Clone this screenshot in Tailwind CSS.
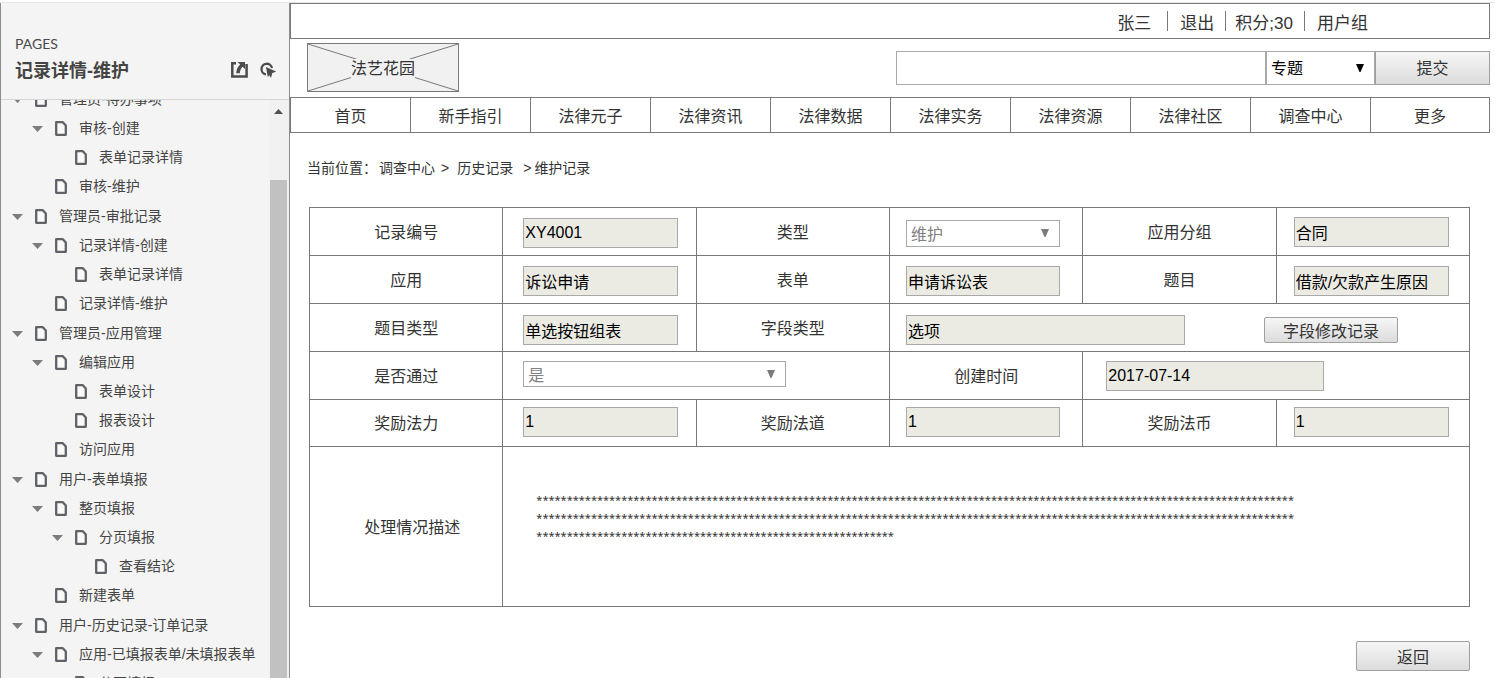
<!DOCTYPE html>
<html lang="zh-CN">
<head>
<meta charset="utf-8">
<title>记录详情-维护</title>
<script src="https://cdn.jsdelivr.net/npm/@tailwindcss/browser@4"></script>
</head>
<body class="flex h-screen flex-col overflow-hidden bg-white font-['Liberation_Sans','Noto_Sans_CJK_SC',sans-serif] text-base leading-6 text-[#333]">
<svg class="hidden" aria-hidden="true">
  <symbol id="page" viewBox="0 0 12 15"><path d="M1.2 1.2h6.600l3 3.300v9.300H1.200z" fill="#fafafa" stroke="#5f6266" stroke-width="2.300" stroke-linejoin="round"/></symbol>
  <symbol id="tri" viewBox="0 0 11 6"><path d="M0 0h11L5.500 6z" fill="#7c7c7c"/></symbol>
  <symbol id="drop" viewBox="0 0 8 8"><path d="M0 0h8L4.500 8h-1z" fill="currentColor"/></symbol>
</svg>
<div class="h-[3px] shrink-0 border-b border-[#e4e6e9]"></div>
<div class="flex min-h-0 flex-1">
  <aside class="flex w-[290px] shrink-0 flex-col border-x border-[#8b8d90] bg-[#f4f4f4]">
    <header class="flex h-[97px] shrink-0 flex-col border-b border-[#d6d6d6] pt-[31px] pr-[13px] pl-[14px]">
      <div class="font-[Lato,sans-serif] text-sm leading-5 text-[#4a4a4a]">PAGES</div>
      <div class="flex items-start justify-between pt-[3px]">
        <h1 class="text-lg leading-7 font-bold text-[#444]">记录详情-维护</h1>
        <div class="flex gap-3 pt-[5px] text-[#4c4c4c]">
          <button type="button" aria-label="打开链接" class="block">
            <svg class="h-4 w-[17px]" viewBox="0 0 17 16"><path d="M5 1.300H1.300v13.300h14.300V2" fill="none" stroke="currentColor" stroke-width="2.500"/><path d="M6.500 0H14v7l-2.400-2.200C10 6.500 9 8.500 8.800 11.200H5.200C5.400 7.500 6.700 4.800 9.200 2.500z" fill="currentColor"/></svg>
          </button>
          <button type="button" aria-label="高亮交互" class="block">
            <svg class="h-4 w-4" viewBox="0 0 16 16"><path d="M6 12.300A5.300 5.300 0 1 1 12 6" fill="none" stroke="currentColor" stroke-width="2.300"/><path d="M6 5l10.300 4.600-4 1.400-1.300 5-1.600-2.800z" fill="currentColor"/><path d="M6 5l1.800 10 3-3z" fill="currentColor"/></svg>
          </button>
        </div>
      </div>
    </header>
    <div class="flex min-h-0 flex-1">
      <div class="min-w-0 flex-1 overflow-hidden">
      <ul class="-mt-[15px] flex flex-col gap-px pl-[11px] text-sm leading-[29px] text-[#444] [&_a]:flex [&_a]:h-[29px] [&_a]:items-center [&_a]:whitespace-nowrap [&_ul]:pl-5 [&_.p]:mr-3 [&_.p]:h-[15px] [&_.p]:w-3 [&_.p]:shrink-0 [&_.t]:mr-3 [&_.t]:h-1.5 [&_.t]:w-[11px] [&_.t]:shrink-0 [&_.n]:mr-3 [&_.n]:w-[11px] [&_.n]:shrink-0">
        <li><a href="#"><svg class="t"><use href="#tri"/></svg><svg class="p"><use href="#page"/></svg>管理员-待办事项</a>
          <ul>
            <li><a href="#"><svg class="t"><use href="#tri"/></svg><svg class="p"><use href="#page"/></svg>审核-创建</a>
              <ul><li><a href="#"><span class="n"></span><svg class="p"><use href="#page"/></svg>表单记录详情</a></li></ul></li>
            <li><a href="#"><span class="n"></span><svg class="p"><use href="#page"/></svg>审核-维护</a></li>
          </ul></li>
        <li><a href="#"><svg class="t"><use href="#tri"/></svg><svg class="p"><use href="#page"/></svg>管理员-审批记录</a>
          <ul>
            <li><a href="#"><svg class="t"><use href="#tri"/></svg><svg class="p"><use href="#page"/></svg>记录详情-创建</a>
              <ul><li><a href="#"><span class="n"></span><svg class="p"><use href="#page"/></svg>表单记录详情</a></li></ul></li>
            <li><a href="#" aria-current="page"><span class="n"></span><svg class="p"><use href="#page"/></svg>记录详情-维护</a></li>
          </ul></li>
        <li><a href="#"><svg class="t"><use href="#tri"/></svg><svg class="p"><use href="#page"/></svg>管理员-应用管理</a>
          <ul>
            <li><a href="#"><svg class="t"><use href="#tri"/></svg><svg class="p"><use href="#page"/></svg>编辑应用</a>
              <ul>
                <li><a href="#"><span class="n"></span><svg class="p"><use href="#page"/></svg>表单设计</a></li>
                <li><a href="#"><span class="n"></span><svg class="p"><use href="#page"/></svg>报表设计</a></li>
              </ul></li>
            <li><a href="#"><span class="n"></span><svg class="p"><use href="#page"/></svg>访问应用</a></li>
          </ul></li>
        <li><a href="#"><svg class="t"><use href="#tri"/></svg><svg class="p"><use href="#page"/></svg>用户-表单填报</a>
          <ul>
            <li><a href="#"><svg class="t"><use href="#tri"/></svg><svg class="p"><use href="#page"/></svg>整页填报</a>
              <ul><li><a href="#"><svg class="t"><use href="#tri"/></svg><svg class="p"><use href="#page"/></svg>分页填报</a>
                <ul><li><a href="#"><span class="n"></span><svg class="p"><use href="#page"/></svg>查看结论</a></li></ul></li></ul></li>
            <li><a href="#"><span class="n"></span><svg class="p"><use href="#page"/></svg>新建表单</a></li>
          </ul></li>
        <li><a href="#"><svg class="t"><use href="#tri"/></svg><svg class="p"><use href="#page"/></svg>用户-历史记录-订单记录</a>
          <ul>
            <li><a href="#"><svg class="t"><use href="#tri"/></svg><svg class="p"><use href="#page"/></svg>应用-已填报表单/未填报表单</a>
              <ul><li><a href="#"><span class="n"></span><svg class="p"><use href="#page"/></svg>分页填报</a></li></ul></li>
          </ul></li>
      </ul>
      </div>
      <div class="flex w-5 shrink-0 flex-col bg-[#f1f1f1] pr-0.5 pl-px" aria-hidden="true">
        <div class="flex h-20 shrink-0 justify-center pt-[9px]"><svg class="h-[5px] w-[9px]" viewBox="0 0 9 5"><path d="M0 5h9L4.500 0z" fill="#505050"/></svg></div>
        <div class="flex-1 bg-[#c1c1c1]"></div>
      </div>
    </div>
  </aside>

  <main class="flex min-w-0 flex-1 flex-col">
    <div class="mr-[5px] flex h-9 shrink-0 items-center justify-end border border-[#797979] pr-[121px] text-[17px]">
      <a href="#" class="pt-1.5 pr-4">张三</a>
      <a href="#" class="flex h-5 items-center border-l border-[#797979] pt-1.5 pr-[11px] pl-3">退出</a>
      <span class="flex h-5 items-center border-l border-[#797979] pt-1.5 pr-[11px] pl-[9px]">积分;30</span>
      <a href="#" class="flex h-5 items-center border-l border-[#797979] pt-1.5 pl-3">用户组</a>
    </div>
    <div class="mr-[5px] flex shrink-0 items-start justify-between pt-1 pb-[5px] pl-[17px]">
      <a href="#" class="relative flex h-[49px] w-[152px] items-center justify-center border border-[#797979] bg-[#f1f1f1] pt-0.5">
        <svg class="absolute inset-0 h-full w-full" viewBox="0 0 150 47" preserveAspectRatio="none"><path d="M0 0l150 47M150 0L0 47" stroke="#797979"/></svg>
        <span class="relative bg-[#f1f1f1] leading-5">法艺花园</span>
      </a>
      <form class="flex pt-2">
        <input type="text" aria-label="搜索" class="h-[34px] w-[370px] border border-[#a9a9a9] px-1">
        <div class="relative h-[34px] w-[109px]">
          <select aria-label="搜索范围" class="h-full w-full appearance-none border border-[#a9a9a9] bg-white pt-0.5 pl-1 text-black"><option>专题</option></select>
          <svg class="pointer-events-none absolute top-[13px] right-[11px] h-2 w-2 text-black"><use href="#drop"/></svg>
        </div>
        <button type="button" class="h-[34px] w-[115px] border border-[#a0a0a0] bg-linear-to-b from-[#f6f6f6] to-[#dcdcdc] pt-0.5">提交</button>
      </form>
    </div>
    <nav class="mr-[5px] grid h-9 shrink-0 grid-cols-10 border-y border-[#797979] text-center leading-[30px] [&_a]:border-l [&_a]:border-[#797979] [&_a]:pt-1 [&_a:last-child]:border-r">
      <a href="#">首页</a><a href="#">新手指引</a><a href="#">法律元子</a><a href="#">法律资讯</a><a href="#">法律数据</a><a href="#">法律实务</a><a href="#">法律资源</a><a href="#">法律社区</a><a href="#">调查中心</a><a href="#">更多</a>
    </nav>
    <nav aria-label="当前位置" class="flex shrink-0 pt-[25px] pl-[17px] text-sm leading-5">
      <span class="w-[72px]">当前位置：</span><a href="#">调查中心</a><span class="pr-2 pl-1.5">&gt;</span><a href="#">历史记录</a><span class="pr-[3px] pl-[10px]">&gt;</span><a href="#">维护记录</a>
    </nav>
    <div class="pt-[29px] pr-[25px] pl-[19px]">
      <table class="w-full table-fixed border-collapse text-center [&_td]:border [&_td]:border-[#797979] [&_td]:p-0 [&_td]:text-left [&_td]:align-top [&_th]:border [&_th]:border-[#797979] [&_th]:p-0 [&_th]:pt-0.5 [&_th]:font-normal [&_input]:block [&_input]:h-[30px] [&_input]:border [&_input]:border-[#a9a9a9] [&_input]:bg-[#ebebe4] [&_input]:px-px [&_input]:text-black">
        <tr class="h-12">
          <th scope="row"><label for="f1">记录编号</label></th><td><div class="pt-[10px] pl-5"><input id="f1" class="w-[155px]" value="XY4001" readonly></div></td>
          <th scope="row"><label for="f2">类型</label></th><td><div class="pt-3 pl-4"><div class="relative h-[27px] w-[154px]"><select id="f2" disabled class="h-full w-full appearance-none border border-[#a9a9a9] bg-white pt-0.5 pl-1 text-[#808080] opacity-100"><option>维护</option></select><svg class="pointer-events-none absolute top-[9px] right-[11px] h-2 w-2 text-[#7a7a7a]"><use href="#drop"/></svg></div></div></td>
          <th scope="row"><label for="f3">应用分组</label></th><td><div class="pt-[9px] pl-[17px]"><input id="f3" class="w-[155px]" value="合同" readonly></div></td>
        </tr>
        <tr class="h-12">
          <th scope="row"><label for="f4">应用</label></th><td><div class="pt-[10px] pl-5"><input id="f4" class="w-[155px]" value="诉讼申请" readonly></div></td>
          <th scope="row"><label for="f5">表单</label></th><td><div class="pt-[10px] pl-4"><input id="f5" class="w-[154px]" value="申请诉讼表" readonly></div></td>
          <th scope="row"><label for="f6">题目</label></th><td><div class="pt-[10px] pl-[17px]"><input id="f6" class="w-[155px]" value="借款/欠款产生原因" readonly></div></td>
        </tr>
        <tr class="h-12">
          <th scope="row"><label for="f7">题目类型</label></th><td><div class="pt-[11px] pl-5"><input id="f7" class="w-[155px]" value="单选按钮组表" readonly></div></td>
          <th scope="row"><label for="f8">字段类型</label></th>
          <td colspan="3"><div class="flex items-center pt-[11px] pl-4"><input id="f8" class="w-[279px]" value="选项" readonly><button type="button" class="ml-[79px] h-[26px] w-[134px] rounded-xs border border-[#a0a0a0] bg-linear-to-b from-[#f6f6f6] to-[#dcdcdc] pt-1 leading-5">字段修改记录</button></div></td>
        </tr>
        <tr class="h-12">
          <th scope="row"><label for="f9">是否通过</label></th>
          <td colspan="2"><div class="pt-[9px] pl-5"><div class="relative h-[26px] w-[263px]"><select id="f9" disabled class="h-full w-full appearance-none border border-[#a9a9a9] bg-white pt-0.5 pl-1 text-[#808080] opacity-100"><option>是</option></select><svg class="pointer-events-none absolute top-[9px] right-[11px] h-2 w-2 text-[#7a7a7a]"><use href="#drop"/></svg></div></div></td>
          <th scope="row"><label for="f10">创建时间</label></th>
          <td colspan="2"><div class="pt-[9px] pl-[23px]"><input id="f10" class="w-[218px]" value="2017-07-14" readonly></div></td>
        </tr>
        <tr class="h-[47px]">
          <th scope="row"><label for="f11">奖励法力</label></th><td><div class="pt-[7px] pl-5"><input id="f11" class="w-[155px]" value="1" readonly></div></td>
          <th scope="row"><label for="f12">奖励法道</label></th><td><div class="pt-[7px] pl-4"><input id="f12" class="w-[154px]" value="1" readonly></div></td>
          <th scope="row"><label for="f13">奖励法币</label></th><td><div class="pt-[7px] pl-[17px]"><input id="f13" class="w-[155px]" value="1" readonly></div></td>
        </tr>
        <tr class="h-40">
          <th scope="row"><span class="pl-3">处理情况描述</span></th>
          <td colspan="5"><p class="pt-11 pl-[33px] font-['Noto_Sans',sans-serif] text-[11px] leading-[18px] whitespace-nowrap">*****************************************************************************************************************************<br>*****************************************************************************************************************************<br>***********************************************************</p></td>
        </tr>
      </table>
      <div class="flex justify-end pt-[34px]">
        <button type="button" class="h-[30px] w-[114px] rounded-xs border border-[#a0a0a0] bg-linear-to-b from-[#f6f6f6] to-[#dcdcdc] pt-1">返回</button>
      </div>
    </div>
  </main>
</div>
</body>
</html>
